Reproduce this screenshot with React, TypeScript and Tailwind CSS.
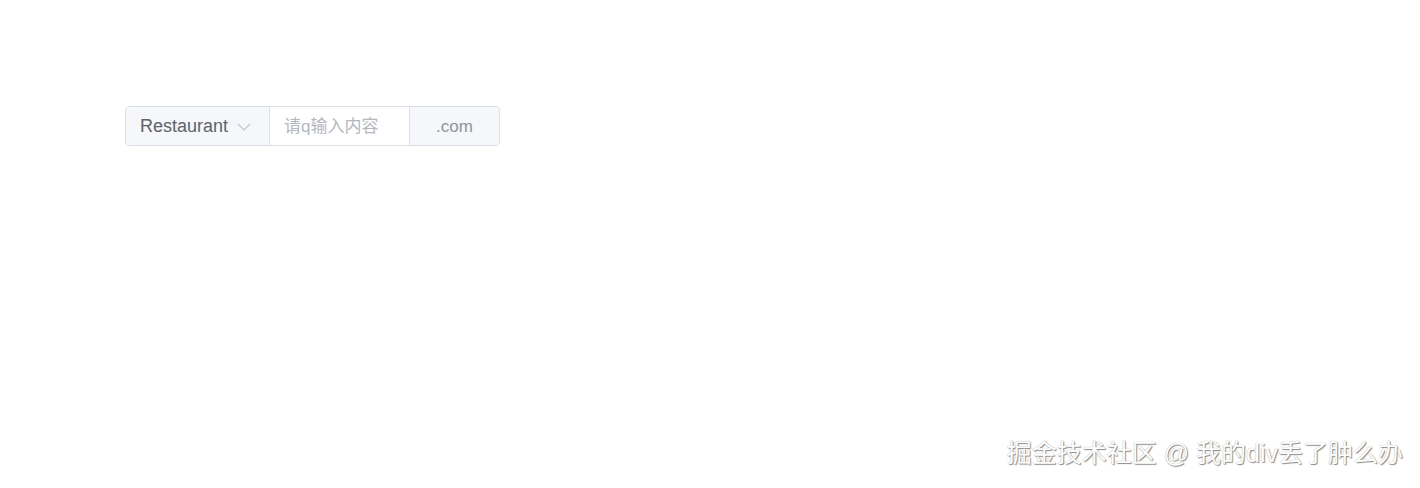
export default function App() {
    return (
        <div
            className="relative w-[1420px] h-[488px] bg-white overflow-hidden"
            style={{ fontFamily: '"Liberation Sans", "Noto Sans CJK SC", sans-serif' }}
        >
            {/* input group */}
            <div className="pt-[106px] pl-[125px]">
                <div className="flex w-[375px] h-[40px] border border-[#dcdfe6] rounded-[4px] overflow-hidden text-[17px]">
                    <div className="w-[144px] shrink-0 bg-[#f5f7fa] border-r border-[#dcdfe6] flex items-center pl-[14px] pt-[1px] text-[#606266]">
                        <span className="text-[18px]">Restaurant</span>
                        <svg className="ml-[9px] mt-[1px]" width="14" height="8" viewBox="0 0 14 8" fill="none">
                            <path d="M1 1l6 6 6-6" stroke="#c0c4cc" strokeWidth="1.1" />
                        </svg>
                    </div>
                    <div className="w-[139px] shrink-0 flex items-center pl-[14px] pt-[1px] text-[#b4b7bd] bg-white">
                        请q输入内容
                    </div>
                    <div className="flex-1 bg-[#f5f7fa] border-l border-[#dcdfe6] flex items-center justify-center pt-[1px] text-[#909399]">
                        .com
                    </div>
                </div>
            </div>

            {/* watermark */}
            <div
                className="absolute right-[17px] bottom-[16px] text-[25px] text-white whitespace-nowrap"
                style={{ textShadow: "1px 1px 1px #8a8a8a, 0 0 1px #9a9a9a" }}
            >
                掘金技术社区 @ 我的div丢了肿么办
            </div>
        </div>
    );
}
